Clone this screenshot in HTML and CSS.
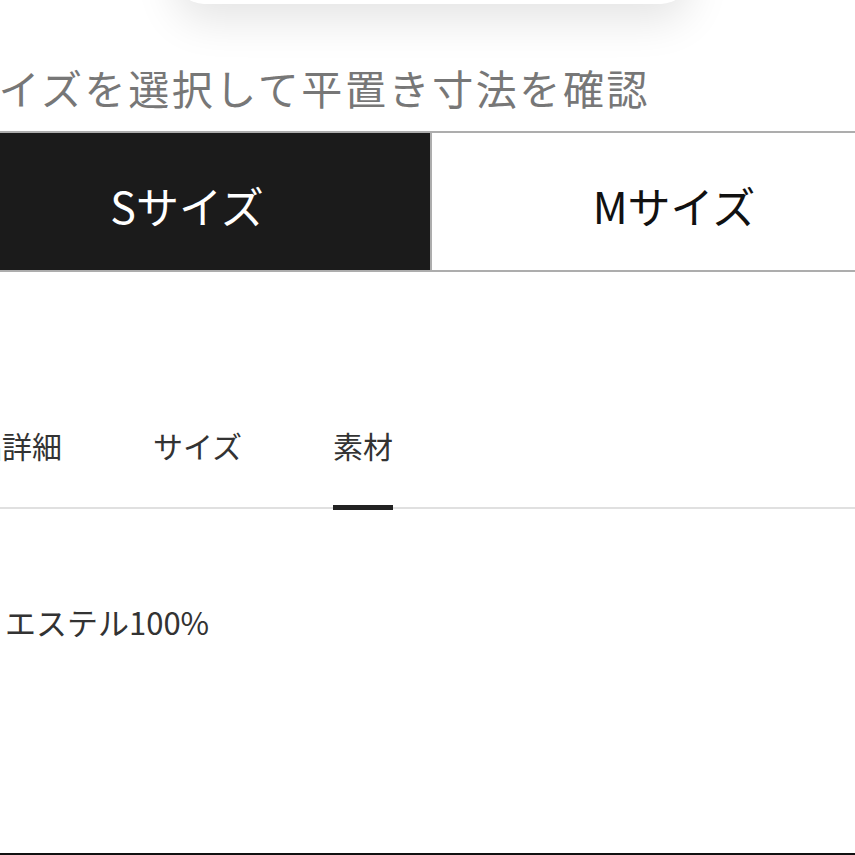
FILE: index.html
```html
<!DOCTYPE html>
<html lang="ja">
<head>
<meta charset="utf-8">
<link rel="stylesheet" href="styles.css">
</head>
<body>
<div class="page">
  <div class="topcard"></div>
  <h2 class="heading">サイズを選択して平置き寸法を確認</h2>
  <div class="sizes">
    <div class="size active">Sサイズ</div>
    <div class="size">Mサイズ</div>
  </div>
  <div class="tabs">
    <div class="tab">商品詳細</div>
    <div class="tab">サイズ</div>
    <div class="tab current">素材</div>
  </div>
  <p class="material">ポリエステル100%</p>
</div>
<div class="bottombar"></div>
</body>
</html>
```
FILE: styles.css
```css
html, body {
  margin: 0;
  padding: 0;
  background: #fff;
}
body {
  width: 855px;
  height: 855px;
  overflow: hidden;
  font-family: "Noto Sans CJK JP", "Noto Sans", sans-serif;
}
.page {
  display: flex;
  flex-direction: column;
}
.topcard {
  margin: -100px 0 0 176px;
  width: 513px;
  height: 104px;
  border-radius: 28px;
  background: #fff;
  box-shadow: 0 16px 44px rgba(0, 0, 0, 0.11);
}
.heading {
  margin: 55px 0 16px -45px;
  font-size: 41px;
  font-weight: 400;
  letter-spacing: 2.6px;
  line-height: 56px;
  color: #777;
  white-space: nowrap;
}
.sizes {
  display: flex;
  margin-left: -56px;
  width: 972px;
  border-top: 2px solid #adadad;
  border-bottom: 2px solid #adadad;
}
.size {
  height: 137px;
  display: flex;
  align-items: center;
  justify-content: center;
  font-size: 43px;
  color: #111;
  box-sizing: border-box;
  padding-top: 6px;
}
.size:first-child {
  width: 486px;
}
.size:last-child {
  width: 486px;
  border-left: 2px solid #adadad;
}
.size.active {
  background: #1b1b1b;
  color: #fff;
}
.tabs {
  display: flex;
  gap: 91px;
  margin: 151px 0 0 -58px;
  width: 971px;
  border-bottom: 2px solid #e0e0e0;
}
.tab {
  font-size: 30px;
  color: #333;
  line-height: 44px;
  padding: 0 0 40px;
  position: relative;
}
.tab.current::after {
  content: "";
  position: absolute;
  left: 0;
  right: 0;
  bottom: -3px;
  height: 5px;
  background: #222;
}
.material {
  margin: 91px 0 0 -57px;
  font-size: 31px;
  color: #333;
  line-height: 44px;
  white-space: nowrap;
}
.bottombar {
  position: fixed;
  left: 0;
  right: 0;
  bottom: 0;
  height: 2px;
  background: #111;
}
```
